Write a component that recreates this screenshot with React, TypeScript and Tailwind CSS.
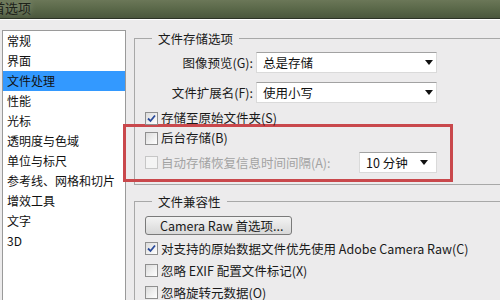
import React from "react";

const font = { fontFamily: '"Noto Sans CJK SC", "Microsoft YaHei", sans-serif' };

const categories = [
  "常规",
  "界面",
  "文件处理",
  "性能",
  "光标",
  "透明度与色域",
  "单位与标尺",
  "参考线、网格和切片",
  "增效工具",
  "文字",
  "3D",
];

const Arrow = () => (
  <svg width="8" height="5" viewBox="0 0 8 5" className="shrink-0">
    <path d="M0 0 H8 L4 5 Z" fill="#111" />
  </svg>
);

const Checkbox = ({ checked = false, disabled = false }: { checked?: boolean; disabled?: boolean }) => (
  <span
    className={`relative flex h-[13px] w-[13px] shrink-0 items-center justify-center border ${
      disabled ? "border-[#c6c6c6] bg-[#f4f4f4]" : "border-[#8f8f8f] bg-gradient-to-br from-[#dcdcdc] to-[#ffffff]"
    }`}
  >
    {checked && (
      <svg width="9" height="9" viewBox="0 0 9 9">
        <path d="M1 4.5 L3.5 7 L8 1.5" fill="none" stroke="#2a4a9a" strokeWidth="1.8" />
      </svg>
    )}
  </span>
);

const CheckRow = ({
  label,
  checked,
  disabled,
  className = "",
}: {
  label: string;
  checked?: boolean;
  disabled?: boolean;
  className?: string;
}) => (
  <div className={`flex items-center gap-[3px] ${className}`}>
    <Checkbox checked={checked} disabled={disabled} />
    <span className={`whitespace-nowrap leading-[16px] ${disabled ? "text-[#a3a3a3]" : "text-[#1a1a1a]"}`}>
      {label}
    </span>
  </div>
);

const Select = ({ value, className = "" }: { value: string; className?: string }) => (
  <div
    className={`flex h-[21px] items-center justify-between border border-[#dadada] border-t-[#a2a2a2] bg-white pl-[6px] pr-[3px] ${className}`}
  >
    <span className="whitespace-nowrap text-[12.5px] leading-[16px] text-[#111]">{value}</span>
    <Arrow />
  </div>
);

export default function App() {
  return (
    <div className="h-[300px] w-[500px] overflow-hidden bg-[#ecebec] text-[12px]" style={font}>
      {/* title bar */}
      <div className="flex h-[19px] items-center border-b border-[#2c3326] bg-gradient-to-b from-[#6b7758] via-[#5a6849] to-[#4b573d] shadow-[0_1px_0_#ffffff]">
        <span className="-ml-[8px] -mt-[3px] text-[13px] leading-[16px] text-[#1d2119] [text-shadow:0_0_6px_rgba(255,255,255,0.35)]">
          首选项
        </span>
      </div>

      <div className="flex">
        {/* category list */}
        <div className="ml-[2px] mt-[11px] h-[290px] w-[124px] shrink-0 border border-[#9a9a9a] bg-white">
          {categories.map((c) => (
            <div
              key={c}
              className={`flex h-[20px] items-center whitespace-nowrap pl-[4px] leading-[16px] text-[#111] ${
                c === "文件处理" ? "bg-[#3399ff]" : ""
              }`}
            >
              {c}
            </div>
          ))}
        </div>

        {/* settings */}
        <div className="ml-[8px] w-[380px] shrink-0 text-[12.5px]">
          <fieldset className="mt-[11px] border border-[#a8a8a8] pb-[2px] pl-[10px] pt-[5px]">
            <legend className="ml-[7px] px-[6px] leading-[17px] text-[#1a1a1a]">文件存储选项</legend>

            <div className="flex items-center">
              <span className="w-[108px] whitespace-nowrap text-right leading-[16px] text-[#1a1a1a]">图像预览(G):</span>
              <Select value="总是存储" className="ml-[3px] w-[181px]" />
            </div>
            <div className="mt-[9px] flex items-center">
              <span className="w-[108px] whitespace-nowrap text-right leading-[16px] text-[#1a1a1a]">文件扩展名(F):</span>
              <Select value="使用小写" className="ml-[3px] w-[181px]" />
            </div>

            <CheckRow label="存储至原始文件夹(S)" checked className="mt-[6px] h-[18px]" />

            {/* highlighted area */}
            <div className="-ml-[22px] -mt-[3px] w-[330px] border-[3px] border-[#c9484c] pb-[6px] pl-[19px] pr-[13px] pt-[1px]">
              <CheckRow label="后台存储(B)" className="h-[20px]" />
              <div className="mt-[4px] flex h-[21px] items-center">
                <CheckRow label="自动存储恢复信息时间间隔(A):" disabled />
                <Select value="10 分钟" className="ml-auto w-[78px] pr-[8px]" />
              </div>
            </div>
          </fieldset>

          <fieldset className="mt-[8px] border border-[#a8a8a8] pl-[10px] pt-[6px]">
            <legend className="ml-[7px] px-[6px] leading-[17px] text-[#1a1a1a]">文件兼容性</legend>
            <button className="flex h-[19px] w-[147px] items-center rounded-[3px] border border-[#7a7a7a] bg-gradient-to-b from-[#f3f3f3] to-[#d8d8d8] pl-[14px] leading-[16px] text-[#1a1a1a]">
              Camera Raw 首选项...
            </button>
            <CheckRow label="对支持的原始数据文件优先使用 Adobe Camera Raw(C)" checked className="mt-[3px] h-[21px]" />
            <CheckRow label="忽略 EXIF 配置文件标记(X)" className="mt-[1px] h-[21px]" />
            <CheckRow label="忽略旋转元数据(O)" className="mt-[1px] h-[21px]" />
          </fieldset>
        </div>
      </div>
    </div>
  );
}
